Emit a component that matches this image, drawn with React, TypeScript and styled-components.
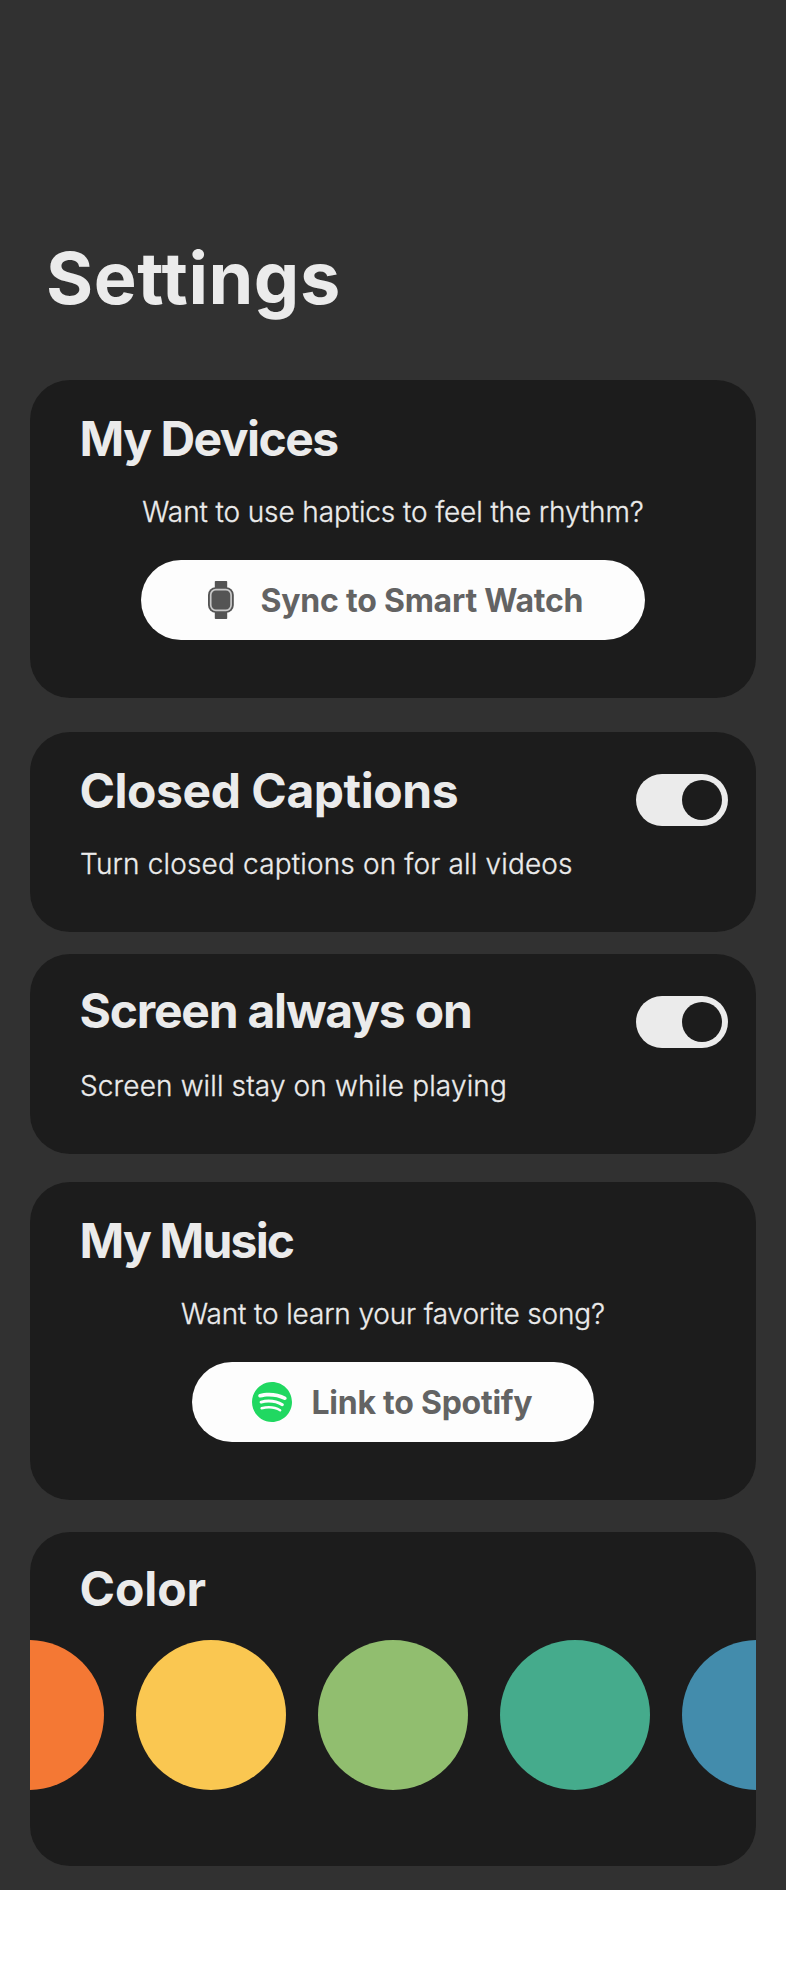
import React from 'react';
import styled, { createGlobalStyle } from 'styled-components';
import { SiSpotify } from 'react-icons/si';

const GlobalStyle = createGlobalStyle`
  * { box-sizing: border-box; }
  body { margin: 0; background: #ffffff; }
`;

const Screen = styled.main`
  display: flex;
  flex-direction: column;
  width: 786px;
  height: 1890px;
  padding: 234px 30px 0;
  background: #313131;
  color: #ebebeb;
  font-family: Inter, "Liberation Sans", sans-serif;
`;

const PageTitle = styled.h1`
  margin: 0 0 59px 16px;
  font-size: 72px;
  font-weight: 700;
  line-height: 87px;
  letter-spacing: 0.55px;
`;

const Card = styled.section<{ $height: number; $top?: number; $after?: number }>`
  display: flex;
  flex-direction: column;
  flex: none;
  height: ${(p) => p.$height}px;
  margin-bottom: ${(p) => p.$after ?? 0}px;
  padding-top: ${(p) => p.$top ?? 29}px;
  border-radius: 40px;
  background: #1c1c1c;
  overflow: hidden;
`;

const CardTitle = styled.h2<{ $tracking: number }>`
  margin: 0 0 0 49.5px;
  font-size: 48px;
  font-weight: 700;
  line-height: 59px;
  letter-spacing: ${(p) => p.$tracking}px;
  white-space: nowrap;
`;

const BodyText = styled.p<{ $tracking: number }>`
  margin: 0;
  font-size: 28px;
  font-weight: 300;
  line-height: 34px;
  letter-spacing: ${(p) => p.$tracking}px;
  white-space: nowrap;
  -webkit-text-stroke: 0.3px currentColor;
`;

const Prompt = styled(BodyText)`
  margin: 27px 0 31px;
  text-align: center;
`;

const Description = styled(BodyText)<{ $gap: number }>`
  margin: ${(p) => p.$gap}px 0 0 50px;
`;

const LinkButton = styled.button<{ $width: number; $inset: number; $gap: number; $tracking: number }>`
  display: flex;
  align-items: center;
  align-self: center;
  gap: ${(p) => p.$gap}px;
  width: ${(p) => p.$width}px;
  height: 80px;
  padding: 0 0 0 ${(p) => p.$inset}px;
  border: 0;
  border-radius: 40px;
  background: #fdfdfd;
  color: #636363;
  font: 700 32px/39px Inter, "Liberation Sans", sans-serif;
  letter-spacing: ${(p) => p.$tracking}px;
  white-space: nowrap;

  svg { flex: none; }
`;

const ToggleCardBody = styled.div`
  display: flex;
  justify-content: space-between;
  align-items: flex-start;
`;

const Switch = styled.button<{ $offset: number }>`
  display: flex;
  justify-content: flex-end;
  align-items: center;
  width: 92px;
  height: 52px;
  margin: ${(p) => p.$offset}px 28px 0 0;
  padding: 0 6px;
  border: 0;
  border-radius: 26px;
  background: #ebebeb;
`;

const Knob = styled.span`
  width: 40px;
  height: 40px;
  border-radius: 50%;
  background: #1c1c1c;
`;

const Swatches = styled.div`
  display: flex;
  justify-content: center;
  gap: 32px;
  margin-top: 22px;
`;

const Swatch = styled.span<{ $color: string }>`
  flex: none;
  width: 150px;
  height: 150px;
  border-radius: 50%;
  background: ${(p) => p.$color};
`;

const WatchIcon = () => (
  <svg width="26" height="38" viewBox="0 0 26 38" fill="none" aria-hidden="true">
    <rect x="6.8" y="0" width="12.4" height="8" rx="0.8" fill="#545454" />
    <rect x="6.8" y="30" width="12.4" height="8" rx="0.8" fill="#545454" />
    <rect x="0" y="6.3" width="25.8" height="25.4" rx="7.6" fill="#545454" />
    <rect x="2.7" y="8.7" width="20.4" height="20.6" rx="5.2" fill="#545454" stroke="#c9c9c9" strokeWidth="1.7" />
  </svg>
);

const swatchColors = ['#f47834', '#fac751', '#91be6f', '#45ab8c', '#438cac'];

type ToggleCardProps = {
  title: string;
  description: string;
  titleTracking: number;
  textTracking: number;
  top: number;
  gap: number;
  after: number;
};

const ToggleCard = ({ title, description, titleTracking, textTracking, top, gap, after }: ToggleCardProps) => (
  <Card $height={200} $top={top} $after={after}>
    <ToggleCardBody>
      <div>
        <CardTitle $tracking={titleTracking}>{title}</CardTitle>
        <Description $gap={gap} $tracking={textTracking}>{description}</Description>
      </div>
      <Switch $offset={42 - top} role="switch" aria-checked="true" aria-label={title}>
        <Knob />
      </Switch>
    </ToggleCardBody>
  </Card>
);

export default function App() {
  return (
    <>
      <GlobalStyle />
      <Screen>
        <PageTitle>Settings</PageTitle>

        <Card $height={318} $after={34}>
          <CardTitle $tracking={-1.53}>My Devices</CardTitle>
          <Prompt $tracking={-0.12}>Want to use haptics to feel the rhythm?</Prompt>
          <LinkButton $width={504} $inset={67} $gap={26.5} $tracking={-0.22}>
            <WatchIcon />
            <span>Sync to Smart Watch</span>
          </LinkButton>
        </Card>

        <ToggleCard
          title="Closed Captions"
          description="Turn closed captions on for all videos"
          titleTracking={-0.46}
          textTracking={0.16}
          top={29}
          gap={27}
          after={22}
        />
        <ToggleCard
          title="Screen always on"
          description="Screen will stay on while playing"
          titleTracking={-1.22}
          textTracking={0.13}
          top={27}
          gap={29}
          after={28}
        />

        <Card $height={318} $after={32}>
          <CardTitle $tracking={-1.8}>My Music</CardTitle>
          <Prompt $tracking={-0.15}>Want to learn your favorite song?</Prompt>
          <LinkButton $width={402} $inset={60} $gap={19.5} $tracking={-0.25}>
            <SiSpotify size={40} color="#20d861" />
            <span>Link to Spotify</span>
          </LinkButton>
        </Card>

        <Card $height={334} $top={27}>
          <CardTitle $tracking={-0.1}>Color</CardTitle>
          <Swatches>
            {swatchColors.map((color) => (
              <Swatch key={color} $color={color} />
            ))}
          </Swatches>
        </Card>
      </Screen>
    </>
  );
}
